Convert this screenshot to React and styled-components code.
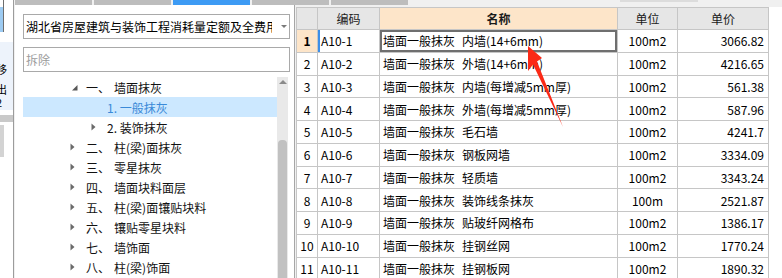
import React from 'react'
import styled, { createGlobalStyle } from 'styled-components'

const GlobalStyle = createGlobalStyle`
  html, body { margin:0; padding:0; background:#f0f0f0; overflow:hidden; }
  body { font-family: "Noto Sans CJK SC", "Noto Sans", sans-serif; font-size:12px; color:#000; }
  * { box-sizing:border-box; }
`

const Screen = styled.div`
  position:relative;
  display:flex;
  width:782px;
  height:278px;
  overflow:hidden;
  background:#f0f0f0;
`

// narrow slice of the window behind, on the far left
const SideStrip = styled.div`
  flex:none;
  width:14px;
  height:100%;
  background:#fff;
  border-right:1px solid #9c9c9c;
  display:flex;
  flex-direction:column;
  overflow:hidden;
`
const StripPiece = styled.div`
  flex:none;
  width:${p => p.w || '100%'};
  height:${p => p.h}px;
  margin-top:${p => p.mt || 0}px;
  background:${p => p.bg};
  border-right:${p => p.edge ? '1px solid #6d6d6d' : 'none'};
`
const StripText = styled.div`
  flex:none;
  height:68px;
  margin-top:10px;
  background:#edf3fb;
  padding-top:22px;
  font-size:11px;
  line-height:11px;
  overflow:hidden;
`
const StripGlyph = styled.span`
  display:block;
  height:11px;
  margin-top:${p => p.mt || 0}px;
  margin-left:-4px;
`

const Main = styled.div`
  flex:1;
  display:flex;
  flex-direction:column;
  min-width:0;
`
const TabBar = styled.div`
  flex:none;
  height:5px;
  display:flex;
  gap:2px;
  padding-left:1px;
`
const Tab = styled.div`
  width:${p => p.w || 77}px;
  height:${p => p.h || 5}px;
  margin-left:${p => p.ml || 0}px;
  background:${p => p.active ? '#3d9bf4' : p.faint ? '#dcdcdc' : '#bdbdbd'};
`
const Content = styled.div`
  flex:1;
  display:flex;
  min-height:0;
`

const LeftPanel = styled.div`
  flex:none;
  width:280px;
  margin-left:1px;
  background:#fff;
  border-right:1px solid #a6a6a6;
  padding:9px 4px 0 8px;
  display:flex;
  flex-direction:column;
`
const Select = styled.div`
  flex:none;
  width:267px;
  height:25px;
  border:1px solid #a9a9a9;
  display:flex;
  align-items:center;
  padding-left:2px;
`
const SelectText = styled.div`
  width:246px;
  overflow:hidden;
  white-space:nowrap;
  font-size:12px;
  line-height:23px;
`
const Caret = styled.span`
  margin-left:9px;
  width:0;
  height:0;
  border-left:3px solid transparent;
  border-right:3px solid transparent;
  border-top:3px solid #7a7a7a;
`
const Search = styled.input`
  flex:none;
  width:267px;
  height:25px;
  margin-top:8px;
  border:1px solid #a9a9a9;
  outline:none;
  padding:0 0 0 2px;
  font-family:"Noto Sans CJK SC", sans-serif;
  font-size:12px;
  &::placeholder { color:#9b9b9b; }
`
const TreeArea = styled.div`
  flex:1;
  margin-top:5px;
  display:flex;
  min-height:0;
`
const TreeList = styled.div`
  width:254px;
  display:flex;
  flex-direction:column;
`
const TreeRow = styled.div`
  flex:none;
  height:20px;
  display:flex;
  align-items:center;
  padding-left:${p => 47 + p.level * 21}px;
  background:${p => p.selected ? '#cce8ff' : 'transparent'};
  color:${p => p.selected ? '#3a8ad8' : '#111'};
  white-space:nowrap;
  font-size:12px;
`
const Toggle = styled.svg`
  flex:none;
  width:16px;
  height:20px;
`
const Name = styled.span`
  margin-left:4px;
`
const ScrollTrack = styled.div`
  flex:none;
  width:11px;
  background:#e9e9e9;
  display:flex;
  flex-direction:column;
  align-items:center;
`
const ScrollUp = styled.span`
  margin-top:3px;
  width:0;
  height:0;
  border-left:4px solid transparent;
  border-right:4px solid transparent;
  border-bottom:4px solid #8a8a8a;
`
const Thumb = styled.div`
  margin-top:56px;
  width:9px;
  flex:1;
  background:#c1c1c1;
  border-radius:4px 4px 0 0;
`

const GridArea = styled.div`
  flex:1;
  margin-left:1px;
  display:flex;
  flex-direction:column;
  padding-top:2px;
`
const GridPanel = styled.div`
  flex:1;
  background:#fff;
`
const Grid = styled.div`
  display:grid;
  grid-template-columns:21px 62px 238px 60px 91px;
  grid-template-rows:22px repeat(11, 22.75px);
  width:473px;
  border-left:1px solid #c6c6c6;
  border-top:1px solid #c6c6c6;
`
const HeadCell = styled.div`
  background:${p => p.hot ? '#fde5c9' : '#e6e6e6'};
  border-right:1px solid #c6c6c6;
  border-bottom:1px solid #c6c6c6;
  display:flex;
  align-items:center;
  justify-content:center;
  font-size:12px;
  font-weight:${p => p.hot ? 700 : 400};
  color:#1a1a1a;
`
const Cell = styled.div`
  border-right:1px solid #c6c6c6;
  border-bottom:1px solid #c6c6c6;
  display:flex;
  align-items:center;
  justify-content:${p => p.align === 'right' ? 'flex-end' : p.align === 'center' ? 'center' : 'flex-start'};
  padding:0 ${p => p.align === 'right' ? 4 : 0}px 0 ${p => p.align === 'left' ? 3 : 0}px;
  background:${p => p.hot ? '#fde5c9' : '#fff'};
  font-weight:${p => p.hot ? 700 : 400};
  font-size:12px;
  white-space:nowrap;
  overflow:hidden;
  box-shadow:${p => p.picked ? 'inset 0 0 0 2px #6f6f6f' : p.cursor ? 'inset 2px 0 0 #3d8fe8' : 'none'};
`
const Gap = styled.span`
  display:inline-block;
  width:7px;
`

const Arrow = styled.svg`
  position:absolute;
  left:0;
  top:0;
  pointer-events:none;
`

const tree = [
  { level: 0, open: true, num: '一、', name: '墙面抹灰' },
  { level: 1, text: '1. 一般抹灰', selected: true },
  { level: 1, text: '2. 装饰抹灰', closed: true },
  { level: 0, num: '二、', name: '柱(梁)面抹灰' },
  { level: 0, num: '三、', name: '零星抹灰' },
  { level: 0, num: '四、', name: '墙面块料面层' },
  { level: 0, num: '五、', name: '柱(梁)面镶贴块料' },
  { level: 0, num: '六、', name: '镶贴零星块料' },
  { level: 0, num: '七、', name: '墙饰面' },
  { level: 0, num: '八、', name: '柱(梁)饰面' },
]

const rows = [
  ['A10-1', '墙面一般抹灰', '内墙(14+6mm)', '100m2', '3066.82'],
  ['A10-2', '墙面一般抹灰', '外墙(14+6mm)', '100m2', '4216.65'],
  ['A10-3', '墙面一般抹灰', '内墙(每增减5mm厚)', '100m2', '561.38'],
  ['A10-4', '墙面一般抹灰', '外墙(每增减5mm厚)', '100m2', '587.96'],
  ['A10-5', '墙面一般抹灰', '毛石墙', '100m2', '4241.7'],
  ['A10-6', '墙面一般抹灰', '钢板网墙', '100m2', '3334.09'],
  ['A10-7', '墙面一般抹灰', '轻质墙', '100m2', '3343.24'],
  ['A10-8', '墙面一般抹灰', '装饰线条抹灰', '100m', '2521.87'],
  ['A10-9', '墙面一般抹灰', '贴玻纤网格布', '100m2', '1386.17'],
  ['A10-10', '墙面一般抹灰', '挂钢丝网', '100m2', '1770.24'],
  ['A10-11', '墙面一般抹灰', '挂钢板网', '100m2', '1890.32'],
]

function TreeToggle({ open }) {
  return (
    <Toggle viewBox="0 0 16 20">
      {open
        ? <path d="M7.5 8 L7.5 13.5 L2 13.5 Z" fill="#575757" />
        : <path d="M0.5 6.5 L4.5 10 L0.5 13.5 Z" fill="#6a6a6a" />}
    </Toggle>
  )
}

export default function App() {
  return (
    <Screen>
      <GlobalStyle />
      <SideStrip>
        <StripPiece h={7} bg="#fff" w="4px" edge />
        <StripPiece h={25} bg="#9dcbf2" w="4px" edge />
        <StripText>
          <StripGlyph>移</StripGlyph>
          <StripGlyph mt={9}>出</StripGlyph>
          <StripGlyph mt={2}>2</StripGlyph>
        </StripText>
        <StripPiece h={7} mt={5} bg="#c9c9c9" />
        <StripPiece h={32} mt={3} bg="#d3d3d3" w="4px" />
      </SideStrip>

      <Main>
        <TabBar>
          <Tab />
          <Tab />
          <Tab active />
          <Tab />
          <Tab />
          <Tab faint w={78} h={2} ml={210} />
        </TabBar>
        <Content>
          <LeftPanel>
            <Select>
              <SelectText>湖北省房屋建筑与装饰工程消耗量定额及全费用基价表</SelectText>
              <Caret />
            </Select>
            <Search placeholder="拆除" />
            <TreeArea>
              <TreeList>
                {tree.map((t, i) => (
                  <TreeRow key={i} level={t.level} selected={t.selected}>
                    {t.level === 0 || t.closed ? <TreeToggle open={t.open} /> : <Toggle viewBox="0 0 16 20" />}
                    {t.num ? <><span>{t.num}</span><Name>{t.name}</Name></> : <span>{t.text}</span>}
                  </TreeRow>
                ))}
              </TreeList>
              <ScrollTrack>
                <ScrollUp />
                <Thumb />
              </ScrollTrack>
            </TreeArea>
          </LeftPanel>

          <GridArea>
            <GridPanel>
              <Grid>
                <HeadCell />
                <HeadCell>编码</HeadCell>
                <HeadCell hot>名称</HeadCell>
                <HeadCell>单位</HeadCell>
                <HeadCell>单价</HeadCell>
                {rows.map((r, i) => (
                  <React.Fragment key={r[0]}>
                    <Cell align="center" hot={i === 0}>{i + 1}</Cell>
                    <Cell align="left" cursor={i === 0}>{r[0]}</Cell>
                    <Cell align="left" picked={i === 0}>{r[1]}<Gap />{r[2]}</Cell>
                    <Cell align="center">{r[3]}</Cell>
                    <Cell align="right">{r[4]}</Cell>
                  </React.Fragment>
                ))}
              </Grid>
            </GridPanel>
          </GridArea>
        </Content>
      </Main>

      <Arrow width="782" height="278" viewBox="0 0 782 278">
        <polygon points="528,46 542,58 537,61.5 563,127 533,64.5 528,71" fill="#fb2a17" />
      </Arrow>
    </Screen>
  )
}
